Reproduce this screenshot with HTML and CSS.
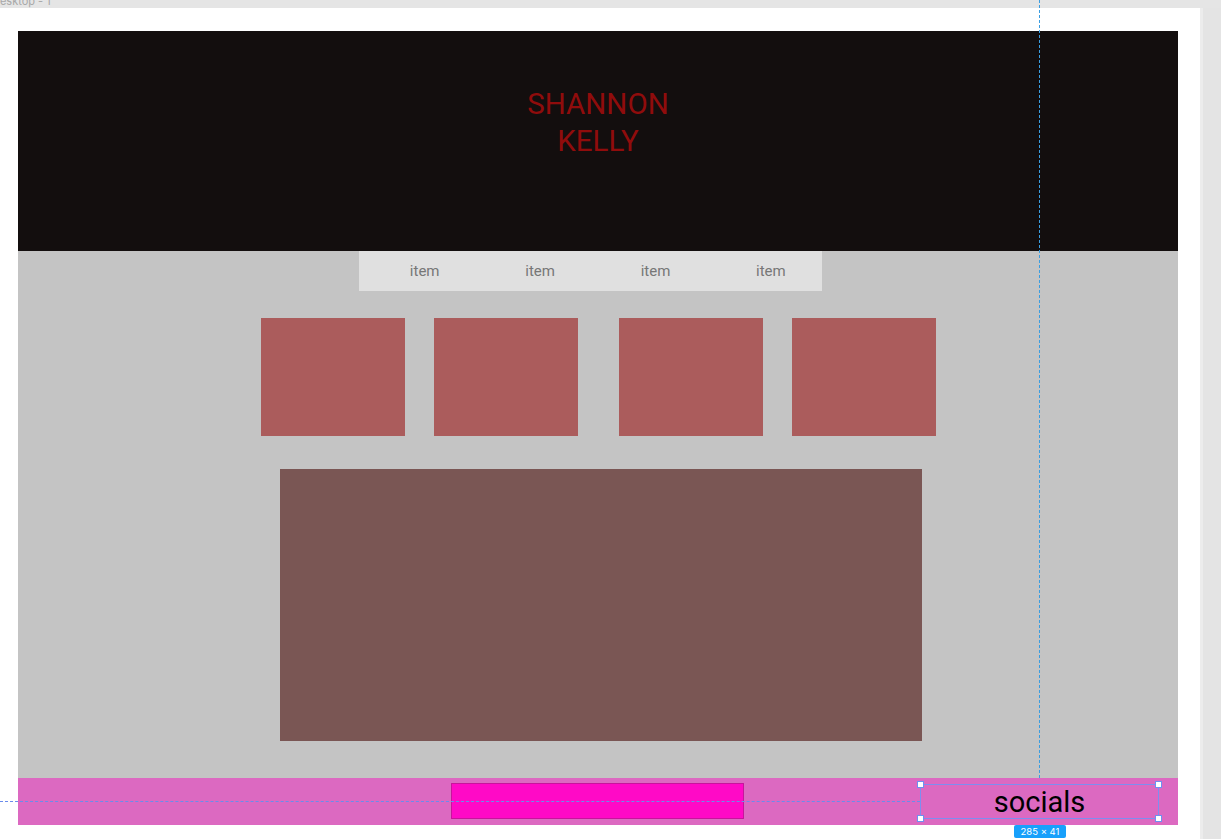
FILE: index.html
```html
<!DOCTYPE html>
<html lang="en">
<head>
<meta charset="utf-8">
<title>Desktop - 1</title>
<link rel="stylesheet" href="styles.css">
</head>
<body>
<div class="canvas">
  <div class="frame-label"><span>Desktop - 1</span></div>
  <div class="canvas-row">
    <div class="frame">
      <header class="hero">
        <h1 class="title">SHANNON<br>KELLY</h1>
      </header>
      <main class="content">
        <nav class="nav">
          <span class="nav-item">item</span>
          <span class="nav-item">item</span>
          <span class="nav-item">item</span>
          <span class="nav-item">item</span>
        </nav>
        <section class="cards">
          <div class="card"></div>
          <div class="card"></div>
          <div class="card card-wide-gap"></div>
          <div class="card"></div>
        </section>
        <section class="feature"></section>
      </main>
      <footer class="footer">
        <div class="footer-bar"></div>
        <div class="socials">
          <span class="socials-text">socials</span>
          <span class="handle handle-tl"></span>
          <span class="handle handle-tr"></span>
          <span class="handle handle-bl"></span>
          <span class="handle handle-br"></span>
          <span class="size-badge">285 × 41</span>
        </div>
      </footer>
    </div>
    <div class="side-strip"></div>
  </div>
  <div class="guide guide-v"></div>
  <div class="guide guide-h"></div>
</div>
</body>
</html>
```

FILE: styles.css
```css
* { box-sizing: border-box; }

html, body {
  margin: 0;
  padding: 0;
  background: #e5e5e5;
  font-family: Roboto, "Liberation Sans", Arial, sans-serif;
}

.canvas {
  position: relative;
  width: 1221px;
  height: 839px;
  overflow: hidden;
  display: flex;
  flex-direction: column;
}

.frame-label {
  height: 8px;
  overflow: hidden;
  background: #e5e5e5;
}

.frame-label span {
  display: block;
  margin-top: -5px;
  margin-left: -8px;
  font-family: Inter, Roboto, sans-serif;
  font-size: 11px;
  line-height: 13px;
  color: #a8a8a8;
}

.canvas-row {
  display: flex;
  flex: 1;
}

.frame {
  width: 1200px;
  background: #ffffff;
  padding: 23px 22px 14px 18px;
  display: flex;
  flex-direction: column;
}

.side-strip {
  flex: 1;
  background: #e4e4e4;
  border-left: 3px solid #ececec;
}

.hero {
  height: 220px;
  background: #130e0e;
  padding-top: 55px;
  text-align: center;
}

.title {
  margin: 0;
  font-weight: 400;
  font-size: 29.5px;
  line-height: 37px;
  color: #900c0c;
}

.content {
  background: #c4c4c4;
  height: 527px;
  display: flex;
  flex-direction: column;
}

.nav {
  margin-left: 341px;
  width: 463px;
  height: 40px;
  background: #e0e0e0;
  display: flex;
  align-items: center;
  padding-left: 8px;
  overflow: visible;
}

.nav-item {
  flex: 0 0 115.4px;
  text-align: center;
  font-size: 15px;
  color: #777777;
}

.cards {
  margin-top: 27px;
  margin-left: 243px;
  display: flex;
  gap: 29px;
}

.card {
  width: 144px;
  height: 118px;
  background: #ab5c5c;
}

.card-wide-gap {
  margin-left: 12px;
}

.feature {
  margin-top: 33px;
  margin-left: 262px;
  width: 642px;
  height: 272px;
  background: #7a5654;
}

.footer {
  height: 47px;
  background: #dc69c1;
  display: flex;
  align-items: center;
}

.footer-bar {
  margin-left: 433px;
  margin-top: -1px;
  width: 293px;
  height: 36px;
  background: #ff0ac6;
  border: 1px solid #c8149c;
}

.socials {
  position: relative;
  margin-left: 176px;
  width: 239px;
  height: 35px;
  border: 1px solid #7d8ef0;
  display: flex;
  align-items: center;
  justify-content: center;
}

.socials-text {
  font-size: 29px;
  line-height: 32px;
  color: #000000;
}

.handle {
  position: absolute;
  width: 7px;
  height: 7px;
  background: #ffffff;
  border: 1px solid #6f8ff0;
}

.handle-tl { left: -4px; top: -4px; }
.handle-tr { right: -4px; top: -4px; }
.handle-bl { left: -4px; bottom: -4px; }
.handle-br { right: -4px; bottom: -4px; }

.size-badge {
  position: absolute;
  left: 93px;
  top: 40px;
  width: 52px;
  height: 13px;
  background: #18a0fb;
  border-radius: 2px;
  color: #ffffff;
  font-family: Inter, Roboto, sans-serif;
  font-size: 9.5px;
  line-height: 13px;
  text-align: center;
}

.guide {
  position: absolute;
  pointer-events: none;
}

.guide-v {
  left: 1039px;
  top: 0;
  width: 0;
  height: 778px;
  border-left: 1px dashed #3a9de0;
}

.guide-h {
  left: 0;
  top: 801px;
  width: 920px;
  height: 0;
  border-top: 1px dashed #6a8cec;
}
```
